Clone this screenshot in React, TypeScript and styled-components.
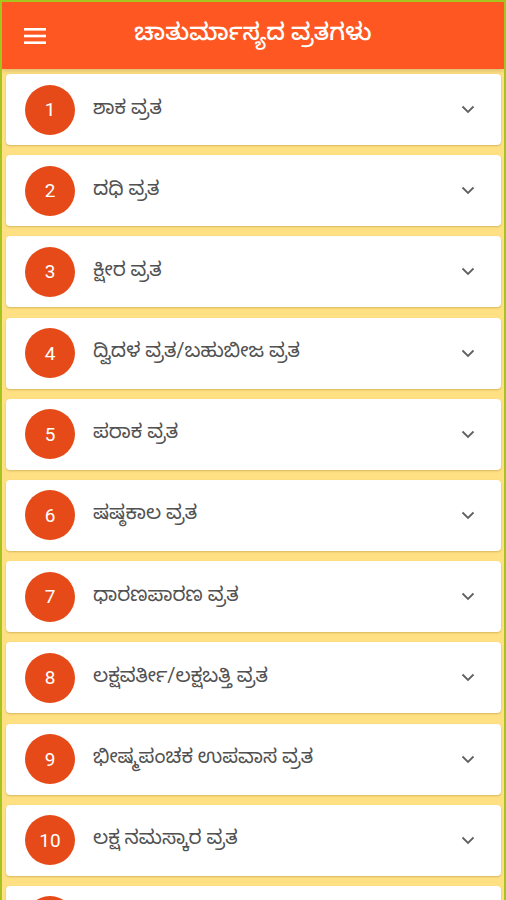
import styled, { createGlobalStyle } from 'styled-components'

const items = [
  'ಶಾಕ ವ್ರತ',
  'ದಧಿ ವ್ರತ',
  'ಕ್ಷೀರ ವ್ರತ',
  'ದ್ವಿದಳ ವ್ರತ/ಬಹುಬೀಜ ವ್ರತ',
  'ಪರಾಕ ವ್ರತ',
  'ಷಷ್ಠಕಾಲ ವ್ರತ',
  'ಧಾರಣಪಾರಣ ವ್ರತ',
  'ಲಕ್ಷವರ್ತೀ/ಲಕ್ಷಬತ್ತಿ ವ್ರತ',
  'ಭೀಷ್ಮಪಂಚಕ ಉಪವಾಸ ವ್ರತ',
  'ಲಕ್ಷ ನಮಸ್ಕಾರ ವ್ರತ',
  'ಗೋಪದ್ಮ ವ್ರತ',
]

/*---> Component <---*/
export default function App() {
  return (
    <>
      <GlobalStyle />
      <Frame>
        <Header>
          <MenuButton aria-label="menu">
            <svg width="22" height="16" viewBox="0 0 22 16">
              <rect x="0" y="0" width="22" height="2.6" fill="#fff" />
              <rect x="0" y="6.7" width="22" height="2.6" fill="#fff" />
              <rect x="0" y="13.4" width="22" height="2.6" fill="#fff" />
            </svg>
          </MenuButton>
          <Title>ಚಾತುರ್ಮಾಸ್ಯದ ವ್ರತಗಳು</Title>
        </Header>
        <List>
          {items.map((label, i) => (
            <Card key={i}>
              <Badge>{i + 1}</Badge>
              <Label>{label}</Label>
              <Chevron width="14" height="9" viewBox="0 0 14 9">
                <path d="M1.5 1.5 L7 7 L12.5 1.5" fill="none" stroke="#616161" strokeWidth="1.8" />
              </Chevron>
            </Card>
          ))}
        </List>
      </Frame>
    </>
  )
}

/*---> Styles <---*/
const GlobalStyle = createGlobalStyle`
  html, body {
    margin: 0;
    padding: 0;
    background: #ffe082;
  }
  body {
    font-family: Roboto, "Noto Sans", "Noto Sans Kannada", sans-serif;
  }
`

const Frame = styled.div`
  width: 506px;
  height: 900px;
  box-sizing: border-box;
  border: 2px solid #a6c41e;
  border-bottom: none;
  background: #ffe083;
  overflow: hidden;
  display: flex;
  flex-direction: column;
`

const Header = styled.div`
  height: 67px;
  flex-shrink: 0;
  background: #ff5722;
  display: flex;
  align-items: center;
  position: relative;
  box-shadow: 0 2px 4px rgba(0, 0, 0, 0.15);
  z-index: 1;
`

const MenuButton = styled.div`
  width: 22px;
  height: 16px;
  margin-left: 22px;
  display: flex;
`

const Title = styled.div`
  flex: 1;
  text-align: center;
  margin-right: 44px;
  color: #ffffff;
  font-size: 24px;
  font-weight: 500;
`

const List = styled.div`
  display: flex;
  flex-direction: column;
  gap: 10.2px;
  padding: 5px 3px 0 4px;
`

const Card = styled.div`
  height: 71px;
  flex-shrink: 0;
  background: #ffffff;
  border-radius: 4px;
  box-shadow: 0 1px 2px rgba(120, 90, 0, 0.3);
  display: flex;
  align-items: center;
  padding: 0 26px 0 19px;
`

const Badge = styled.div`
  width: 50px;
  height: 50px;
  border-radius: 50%;
  background: #e64a19;
  color: #ffffff;
  display: flex;
  align-items: center;
  justify-content: center;
  font-size: 19px;
  font-weight: 400;
  flex-shrink: 0;
`

const Label = styled.div`
  flex: 1;
  margin-left: 18px;
  color: #525252;
  font-size: 20px;
  font-weight: 400;
`

const Chevron = styled.svg`
  flex-shrink: 0;
`
